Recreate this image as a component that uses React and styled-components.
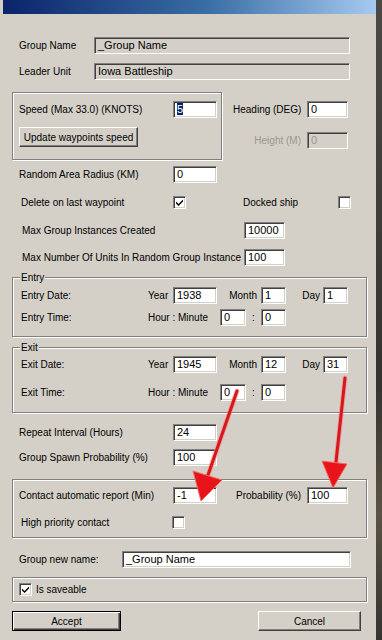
import styled, { createGlobalStyle } from "styled-components";

const GlobalStyle = createGlobalStyle`
  html, body {
    margin: 0;
    padding: 0;
  }
  body {
    width: 382px;
    height: 640px;
    overflow: hidden;
    background: #3b3a36;
    font-family: "Liberation Sans", Arial, sans-serif;
    font-size: 10px;
    color: #000;
  }
`;

const Page = styled.div`
  position: relative;
  width: 382px;
  height: 640px;
  display: flex;
`;

const Window = styled.div`
  width: 376px;
  height: 640px;
  background: #d4d0c8;
  display: flex;
  flex-direction: column;
`;

const Desktop = styled.div`
  flex: 1;
  background: linear-gradient(180deg, #4a4943 0%, #34332f 60%, #5a5344 80%, #34332f 100%);
`;

const TitleBar = styled.div`
  height: 14px;
  margin-left: 3px;
  background: linear-gradient(90deg, #0a246a 0%, #3a6ea5 55%, #a6caf0 100%);
`;

const Body = styled.div`
  width: 355px;
  padding: 23px 0 0 12px;
  display: flex;
  flex-direction: column;
`;

const Row = styled.div`
  display: flex;
  align-items: center;
  margin-top: ${(p) => p.$mt || 0}px;
  padding-left: ${(p) => p.$pl || 0}px;
  height: ${(p) => p.$h || 17}px;
`;

const Label = styled.span`
  width: ${(p) => p.$w}px;
  flex: none;
  white-space: nowrap;
  color: ${(p) => (p.$disabled ? "#9a978f" : "#000")};
  text-align: ${(p) => (p.$right ? "right" : p.$center ? "center" : "left")};
  padding-right: ${(p) => p.$pr || 0}px;
  box-sizing: border-box;
`;

const Field = styled.div`
  width: ${(p) => p.$w}px;
  height: 17px;
  flex: none;
  box-sizing: border-box;
  border-style: solid;
  border-width: 1px;
  border-color: #808080 #fff #fff #808080;
  box-shadow: inset 1px 1px 0 #404040, inset -1px -1px 0 #d4d0c8;
  background: ${(p) => (p.$gray ? "#d4d0c8" : "#fff")};
  color: ${(p) => (p.$dim ? "#9a978f" : "#000")};
  padding: 0 0 0 3px;
  font-size: 11px;
  line-height: 15px;
  white-space: nowrap;
  overflow: hidden;
`;

const Sel = styled.span`
  background: #0a246a;
  color: #fff;
`;

const Check = styled.div`
  width: 13px;
  height: 13px;
  flex: none;
  box-sizing: border-box;
  border-style: solid;
  border-width: 1px;
  border-color: #808080 #fff #fff #808080;
  box-shadow: inset 1px 1px 0 #404040, inset -1px -1px 0 #d4d0c8;
  background: #fff;
  display: flex;
  align-items: center;
  justify-content: center;
`;

const Spacer = styled.div`
  width: ${(p) => p.$w}px;
  flex: none;
`;

const Button = styled.div`
  width: ${(p) => p.$w}px;
  height: 20px;
  flex: none;
  box-sizing: border-box;
  border-style: solid;
  border-width: 1px;
  border-color: ${(p) => (p.$default ? "#000" : "#fff #404040 #404040 #fff")};
  box-shadow: ${(p) =>
    p.$default
      ? "inset 1px 1px 0 #fff, inset -1px -1px 0 #404040, inset -2px -2px 0 #808080"
      : "inset -1px -1px 0 #808080"};
  background: #d4d0c8;
  display: flex;
  align-items: center;
  justify-content: center;
  white-space: nowrap;
`;

const Group = styled.div`
  position: relative;
  box-sizing: border-box;
  width: ${(p) => p.$w || 355}px;
  height: ${(p) => p.$h}px;
  margin-top: ${(p) => p.$mt || 0}px;
  border: 1px solid #808080;
  box-shadow: inset 1px 1px 0 #fff, 1px 1px 0 #fff;
  padding: ${(p) => p.$pad};
  display: flex;
  flex-direction: column;
  flex: none;
`;

const Legend = styled.span`
  position: absolute;
  top: -7px;
  left: 7px;
  padding: 0 1px;
  background: #d4d0c8;
  line-height: 13px;
`;

const SpeedArea = styled.div`
  display: flex;
  margin-top: 12px;
`;

const SideColumn = styled.div`
  display: flex;
  flex-direction: column;
  padding: 9px 0 0 11px;
`;

const ButtonBar = styled.div`
  display: flex;
  justify-content: space-between;
  width: 349px;
  margin-top: 9px;
`;

const Overlay = styled.svg`
  position: absolute;
  left: 0;
  top: 0;
  pointer-events: none;
`;

const Tick = () => (
  <svg width="9" height="9" viewBox="0 0 9 9">
    <path d="M1 3.5 L3.5 6 L8 1.5 L8 3.5 L3.5 8 L1 5.5 Z" fill="#000" />
  </svg>
);

const Arrow = ({ x1, y1, x2, y2, head }) => (
  <g>
    <line x1={x1} y1={y1} x2={x2} y2={y2} stroke="#f28a8a" strokeWidth="5" strokeLinecap="round" opacity="0.6" />
    <line x1={x1} y1={y1} x2={x2} y2={y2} stroke="#d8161b" strokeWidth="3" strokeLinecap="round" />
    <polygon points={head} fill="#e8141a" stroke="#f06a6a" strokeWidth="1" strokeLinejoin="round" />
  </g>
);

const App = () => {
  return (
    <>
      <GlobalStyle />
      <Page>
        <Window>
          <TitleBar />
          <Body>
            <Row $pl={7}>
              <Label $w={75}>Group Name</Label>
              <Field $w={256} $gray>_Group Name</Field>
            </Row>
            <Row $pl={7} $mt={9}>
              <Label $w={75}>Leader Unit</Label>
              <Field $w={256} $gray>Iowa Battleship</Field>
            </Row>

            <SpeedArea>
              <Group $w={210} $h={68} $pad="8px 0 0 6px">
                <Row>
                  <Label $w={154}>Speed (Max 33.0) (KNOTS)</Label>
                  <Field $w={44}>
                    <Sel>5</Sel>
                  </Field>
                </Row>
                <Row $mt={9} $h={20}>
                  <Button $w={119}>Update waypoints speed</Button>
                </Row>
              </Group>
              <SideColumn>
                <Row>
                  <Label $w={74}>Heading (DEG)</Label>
                  <Field $w={41}>0</Field>
                </Row>
                <Row $mt={14}>
                  <Label $w={74} $right $pr={6} $disabled>
                    Height (M)
                  </Label>
                  <Field $w={41} $gray $dim>
                    0
                  </Field>
                </Row>
              </SideColumn>
            </SpeedArea>

            <Row $pl={7} $mt={6}>
              <Label $w={154}>Random Area Radius (KM)</Label>
              <Field $w={44}>0</Field>
            </Row>
            <Row $pl={9} $mt={13} $h={13}>
              <Label $w={152}>Delete on last waypoint</Label>
              <Check>
                <Tick />
              </Check>
              <Spacer $w={57} />
              <Label $w={95}>Docked ship</Label>
              <Check />
            </Row>
            <Row $pl={10} $mt={13}>
              <Label $w={222}>Max Group Instances Created</Label>
              <Field $w={41}>10000</Field>
            </Row>
            <Row $pl={10} $mt={10}>
              <Label $w={222}>Max Number Of Units In Random Group Instance</Label>
              <Field $w={41}>100</Field>
            </Row>

            <Group $h={60} $mt={11} $pad="9px 0 0 8px">
              <Legend>Entry</Legend>
              <Row>
                <Label $w={127}>Entry Date:</Label>
                <Label $w={25}>Year</Label>
                <Field $w={44}>1938</Field>
                <Label $w={44} $right $pr={4}>
                  Month
                </Label>
                <Field $w={25}>1</Field>
                <Label $w={37} $right $pr={3}>
                  Day
                </Label>
                <Field $w={25}>1</Field>
              </Row>
              <Row $mt={5}>
                <Label $w={127}>Entry Time:</Label>
                <Label $w={72}>Hour : Minute</Label>
                <Field $w={26}>0</Field>
                <Label $w={15} $center>
                  :
                </Label>
                <Field $w={25}>0</Field>
              </Row>
            </Group>

            <Group $h={66} $mt={10} $pad="8px 0 0 8px">
              <Legend>Exit</Legend>
              <Row>
                <Label $w={127}>Exit Date:</Label>
                <Label $w={25}>Year</Label>
                <Field $w={44}>1945</Field>
                <Label $w={44} $right $pr={4}>
                  Month
                </Label>
                <Field $w={25}>12</Field>
                <Label $w={37} $right $pr={3}>
                  Day
                </Label>
                <Field $w={25}>31</Field>
              </Row>
              <Row $mt={11}>
                <Label $w={127}>Exit Time:</Label>
                <Label $w={72}>Hour : Minute</Label>
                <Field $w={26}>0</Field>
                <Label $w={15} $center>
                  :
                </Label>
                <Field $w={25}>0</Field>
              </Row>
            </Group>

            <Row $pl={7} $mt={11}>
              <Label $w={154}>Repeat Interval (Hours)</Label>
              <Field $w={44}>24</Field>
            </Row>
            <Row $pl={7} $mt={8}>
              <Label $w={154}>Group Spawn Probability (%)</Label>
              <Field $w={44}>100</Field>
            </Row>

            <Group $h={59} $mt={13} $pad="7px 0 0 6px">
              <Row>
                <Label $w={154}>Contact automatic report (Min)</Label>
                <Field $w={44}>-1</Field>
                <Spacer $w={19} />
                <Label $w={71}>Probability (%)</Label>
                <Field $w={41}>100</Field>
              </Row>
              <Row $mt={12} $h={13} $pl={2}>
                <Label $w={151}>High priority contact</Label>
                <Check />
              </Row>
            </Group>

            <Row $pl={7} $mt={13}>
              <Label $w={103}>Group new name:</Label>
              <Field $w={229}>_Group Name</Field>
            </Row>

            <Group $h={25} $mt={9} $pad="5px 0 0 6px">
              <Row $h={13}>
                <Check>
                  <Tick />
                </Check>
                <Spacer $w={4} />
                <Label $w={100}>Is saveable</Label>
              </Row>
            </Group>

            <ButtonBar>
              <Button $w={109} $default>
                Accept
              </Button>
              <Button $w={103}>Cancel</Button>
            </ButtonBar>
          </Body>
        </Window>
        <Desktop />

        <Overlay width="382" height="640" viewBox="0 0 382 640">
          <Arrow x1={237} y1={391} x2={207} y2={478} head="193,471 222,480 201,501" />
          <Arrow x1={345} y1={378} x2={336} y2={462} head="322,461 347,464 333,488" />
        </Overlay>
      </Page>
    </>
  );
};

export default App;
